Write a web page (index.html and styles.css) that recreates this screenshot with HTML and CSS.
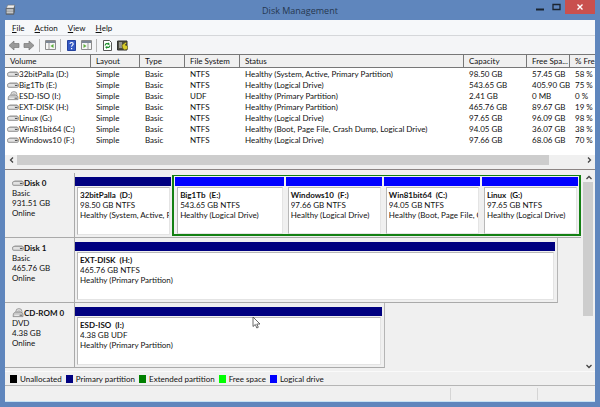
FILE: index.html
```
<!DOCTYPE html>
<html lang="en">
<head>
    <meta charset="UTF-8">
    <meta name="viewport" content="width=device-width, initial-scale=1.0">
    <title>Disk Management</title>
    <link rel="stylesheet" href="styles.css">
</head>
<body>
    <!-- shared drive icons -->
    <svg class="defs" width="0" height="0">
        <symbol id="drive" viewBox="0 0 12 8">
            <path d="M3 1.500h7l1.500 2H.5z" fill="#e4e4e4" stroke="#a0a0a0" stroke-width=".5"/>
            <rect x=".5" y="2.500" width="11" height="4" rx="1.500" fill="#cfcfcf" stroke="#888" stroke-width=".7"/>
            <path d="M1.500 4h6" stroke="#f6f6f6"/>
            <path d="M8 4.500h2.500" stroke="#555"/>
        </symbol>
        <symbol id="cdrom" viewBox="0 0 12 11">
            <circle cx="7" cy="4" r="3.4" fill="#dedede" stroke="#888" stroke-width=".8"/>
            <circle cx="7" cy="4" r="1" fill="#fff" stroke="#888" stroke-width=".6"/>
            <path d="M1 6l2-1.500h6l2.500 1.500v3.500H.5z" fill="#c8c8c8" stroke="#777" stroke-width=".7"/>
            <path d="M2 8h5" stroke="#f4f4f4"/>
            <path d="M8 8h2.500" stroke="#666"/>
        </symbol>
    </svg>

    <div class="window">
        <header class="titlebar">
            <svg class="app-icon" viewBox="0 0 10 11">
                <path d="M2.500 1h6.500l-1 3H1z" fill="#f0f0f0" stroke="#777" stroke-width=".6"/>
                <path d="M1 4h7v5.500H1z" fill="#8d9296" stroke="#555" stroke-width=".6"/>
                <path d="M8 4l1-3v6L8 9.500z" fill="#5b6165"/>
                <path d="M1.500 5.500h6M1.500 7.500h6" stroke="#eee" stroke-width=".8"/>
            </svg>
            <h1 class="title">Disk Management</h1>
            <div class="window-buttons">
                <button class="win-btn" aria-label="Minimize"><svg width="10" height="8"><path d="M1 6.500h8" stroke="#1b2430" stroke-width="2"/></svg></button>
                <button class="win-btn" aria-label="Maximize"><svg width="9" height="8"><path d="M1 1.500h7v5H1z" fill="none" stroke="#1b2430" stroke-width="1.300"/></svg></button>
                <button class="win-btn close" aria-label="Close"><svg width="8" height="8"><path d="M1.500 1.500l5 5M6.500 1.500l-5 5" stroke="#fff" stroke-width="1.400"/></svg></button>
            </div>
        </header>

        <main class="client">
            <nav class="menubar">
                <button><u>F</u>ile</button>
                <button><u>A</u>ction</button>
                <button><u>V</u>iew</button>
                <button><u>H</u>elp</button>
            </nav>

            <div class="toolbar">
                <button aria-label="Back"><svg width="12" height="11"><path d="M1 5.500L6 1v2.500h5v4H6V10z" fill="#999" stroke="#777" stroke-width=".7"/></svg></button>
                <button aria-label="Forward"><svg width="12" height="11"><path d="M11 5.500L6 1v2.500H1v4h5V10z" fill="#999" stroke="#777" stroke-width=".7"/></svg></button>
                <span class="sep"></span>
                <button aria-label="Show console tree"><svg width="11" height="10"><path d="M.5.5h10v9H.5z" fill="#f6f6f6" stroke="#8c8c8c"/><path d="M1 2h9" stroke="#7c8796" stroke-width="2"/><path d="M4 3v6.500" stroke="#999"/><path d="M8.500 4v4L5.500 6z" fill="#5cae3a"/></svg></button>
                <span class="sep"></span>
                <button aria-label="Help"><svg width="9" height="11"><path d="M.5.5h8v10h-8z" fill="#3459c4" stroke="#24419d"/><path d="M3 4c0-2 3.200-2 3.200 0 0 1.200-1.600 1.200-1.600 2.800" fill="none" stroke="#fff" stroke-width="1.100"/><path d="M4 8h1.200v1.200H4z" fill="#fff"/></svg></button>
                <button aria-label="Show action pane"><svg width="11" height="10"><path d="M.5.5h10v9H.5z" fill="#f6f6f6" stroke="#8c8c8c"/><path d="M1 2h9" stroke="#7c8796" stroke-width="2"/><path d="M7 3v6.500" stroke="#999"/><path d="M2.500 4v4l3-2z" fill="#5cae3a"/></svg></button>
                <span class="sep"></span>
                <button aria-label="Refresh"><svg width="9" height="11"><path d="M.5.5h6l2 2v8h-8z" fill="#fff" stroke="#555"/><path d="M2.200 5.500c0-2 2-2.500 3.500-1.500M6.800 5.500c0 2-2 2.500-3.500 1.500" fill="none" stroke="#1e8e2e" stroke-width="1.200"/><path d="M5 2.200l2 2-2.500 1zM4 9l-2-2 2.500-1z" fill="#1e8e2e"/></svg></button>
                <button aria-label="Settings"><svg width="11" height="11"><path d="M.5 1h9.500v9H.5z" fill="#4d4d40" stroke="#333"/><path d="M2 3h3M2 5h3M2 7h3" stroke="#ddd"/><path d="M5 5l4-3 .5 1.500L8 5l2.500 1v3l-3 1-2-2z" fill="#d8cc2c" stroke="#5a5510" stroke-width=".5"/></svg></button>
            </div>

            <section class="volumes">
                <table class="volume-table">
                    <colgroup>
                        <col class="c-volume"><col class="c-layout"><col class="c-type"><col class="c-fs"><col><col class="c-capacity"><col class="c-free"><col class="c-percent">
                    </colgroup>
                    <thead>
                        <tr><th>Volume</th><th>Layout</th><th>Type</th><th>File System</th><th>Status</th><th>Capacity</th><th>Free Spa...</th><th>% Fre</th></tr>
                    </thead>
                    <tbody>
                        <tr><td><svg class="icon"><use href="#drive"/></svg>32bitPalla (D:)</td><td>Simple</td><td>Basic</td><td>NTFS</td><td>Healthy (System, Active, Primary Partition)</td><td>98.50 GB</td><td>57.45 GB</td><td>58 %</td></tr>
                        <tr><td><svg class="icon"><use href="#drive"/></svg>Big1Tb (E:)</td><td>Simple</td><td>Basic</td><td>NTFS</td><td>Healthy (Logical Drive)</td><td>543.65 GB</td><td>405.90 GB</td><td>75 %</td></tr>
                        <tr><td><svg class="icon"><use href="#cdrom"/></svg>ESD-ISO (I:)</td><td>Simple</td><td>Basic</td><td>UDF</td><td>Healthy (Primary Partition)</td><td>2.41 GB</td><td>0 MB</td><td>0 %</td></tr>
                        <tr><td><svg class="icon"><use href="#drive"/></svg>EXT-DISK (H:)</td><td>Simple</td><td>Basic</td><td>NTFS</td><td>Healthy (Primary Partition)</td><td>465.76 GB</td><td>89.67 GB</td><td>19 %</td></tr>
                        <tr><td><svg class="icon"><use href="#drive"/></svg>Linux (G:)</td><td>Simple</td><td>Basic</td><td>NTFS</td><td>Healthy (Logical Drive)</td><td>97.65 GB</td><td>96.09 GB</td><td>98 %</td></tr>
                        <tr><td><svg class="icon"><use href="#drive"/></svg>Win81bit64 (C:)</td><td>Simple</td><td>Basic</td><td>NTFS</td><td>Healthy (Boot, Page File, Crash Dump, Logical Drive)</td><td>94.05 GB</td><td>36.07 GB</td><td>38 %</td></tr>
                        <tr><td><svg class="icon"><use href="#drive"/></svg>Windows10 (F:)</td><td>Simple</td><td>Basic</td><td>NTFS</td><td>Healthy (Logical Drive)</td><td>97.66 GB</td><td>68.06 GB</td><td>70 %</td></tr>
                    </tbody>
                </table>
                <div class="hscroll">
                    <button aria-label="Scroll left"><svg width="5" height="6"><path d="M4 .5L1.500 3 4 5.500" fill="none" stroke="#444" stroke-width="1.300"/></svg></button>
                    <div class="track"><div class="thumb"></div></div>
                    <button aria-label="Scroll right"><svg width="5" height="6"><path d="M1 .5L3.500 3 1 5.500" fill="none" stroke="#444" stroke-width="1.300"/></svg></button>
                </div>
            </section>

            <section class="graph">
                <div class="disks">
                    <div class="disk">
                        <div class="disk-label">
                            <h2><svg class="icon"><use href="#drive"/></svg>Disk 0</h2>
                            <p>Basic</p><p>931.51 GB</p><p>Online</p>
                        </div>
                        <div class="partitions">
                            <div class="part primary first">
                                <div class="info"><h3>32bitPalla&nbsp; (D:)</h3><p>98.50 GB NTFS</p><p>Healthy (System, Active, Primary Partition)</p></div>
                            </div>
                            <div class="extended">
                                <div class="part logical big"><div class="info"><h3>Big1Tb&nbsp; (E:)</h3><p>543.65 GB NTFS</p><p>Healthy (Logical Drive)</p></div></div>
                                <div class="part logical"><div class="info"><h3>Windows10&nbsp; (F:)</h3><p>97.66 GB NTFS</p><p>Healthy (Logical Drive)</p></div></div>
                                <div class="part logical"><div class="info"><h3>Win81bit64&nbsp; (C:)</h3><p>94.05 GB NTFS</p><p>Healthy (Boot, Page File, Crash Dump, Logical Drive)</p></div></div>
                                <div class="part logical"><div class="info"><h3>Linux&nbsp; (G:)</h3><p>97.65 GB NTFS</p><p>Healthy (Logical Drive)</p></div></div>
                            </div>
                        </div>
                    </div>
                    <div class="disk disk-medium">
                        <div class="disk-label">
                            <h2><svg class="icon"><use href="#drive"/></svg>Disk 1</h2>
                            <p>Basic</p><p>465.76 GB</p><p>Online</p>
                        </div>
                        <div class="partitions">
                            <div class="part primary"><div class="info"><h3>EXT-DISK&nbsp; (H:)</h3><p>465.76 GB NTFS</p><p>Healthy (Primary Partition)</p></div></div>
                        </div>
                    </div>
                    <div class="disk disk-small">
                        <div class="disk-label">
                            <h2><svg class="icon"><use href="#cdrom"/></svg>CD-ROM 0</h2>
                            <p>DVD</p><p>4.38 GB</p><p>Online</p>
                        </div>
                        <div class="partitions">
                            <div class="part primary"><div class="info"><h3>ESD-ISO&nbsp; (I:)</h3><p>4.38 GB UDF</p><p>Healthy (Primary Partition)</p></div></div>
                        </div>
                    </div>
                </div>
                <div class="vscroll">
                    <button aria-label="Scroll up"><svg width="6" height="5"><path d="M.5 4L3 1.500 5.500 4" fill="none" stroke="#444" stroke-width="1.300"/></svg></button>
                    <div class="track"><div class="thumb"></div></div>
                    <button aria-label="Scroll down"><svg width="6" height="5"><path d="M.5 1L3 3.500 5.500 1" fill="none" stroke="#444" stroke-width="1.300"/></svg></button>
                </div>
            </section>

            <ul class="legend">
                <li><span class="swatch black"></span>Unallocated</li>
                <li><span class="swatch navy"></span>Primary partition</li>
                <li><span class="swatch green"></span>Extended partition</li>
                <li><span class="swatch lime"></span>Free space</li>
                <li><span class="swatch blue"></span>Logical drive</li>
            </ul>

            <footer class="statusbar"><span></span><span></span><span></span></footer>
        </main>
        <svg class="cursor" viewBox="0 0 9 13"><path d="M1 1v9.500l2.300-2 1.500 3.500 1.500-.7-1.500-3.300H8z" fill="#fff" stroke="#444" stroke-width=".8"/></svg>
    </div>
</body>
</html>
```
FILE: styles.css
```
* {
    box-sizing: border-box;
}
body {
    margin: 0;
    font-family: Lato, "Open Sans", sans-serif;
    font-size: 8px;
    line-height: 10px;
    color: #111;
}
h1, h2, h3, p, ul {
    margin: 0;
    padding: 0;
    font-size: inherit;
    white-space: nowrap;
}
button {
    display: flex;
    align-items: center;
    justify-content: center;
    border: none;
    padding: 0;
    background: none;
    font: inherit;
    color: inherit;
}
.defs {
    position: absolute;
}
.window {
    position: relative;
    display: flex;
    flex-direction: column;
    min-height: 100vh;
    padding: 0 5px 5px;
    background: #5f86bd;
}

/* title bar */
.titlebar {
    display: grid;
    grid-template-columns: 100px 1fr 100px;
    height: 20px;
}
.app-icon {
    width: 11px;
    height: 12px;
    margin-top: 4px;
}
.title {
    font-family: "Open Sans", sans-serif;
    font-size: 9px;
    line-height: 21px;
    font-weight: normal;
    text-align: center;
    color: #26374f;
}
.window-buttons {
    display: flex;
    justify-content: flex-end;
    height: 14px;
}
.win-btn {
    width: 17px;
}
.win-btn.close {
    width: 30px;
    background: #c9504e;
}

.client {
    flex: 1;
    display: flex;
    flex-direction: column;
    background: #f0f0f0;
}
.menubar {
    display: flex;
    gap: 10px;
    height: 16px;
    padding-left: 7px;
    border-bottom: 1px solid #d5d7da;
    background: #f6f8fa;
}
.toolbar {
    display: flex;
    align-items: center;
    gap: 3px;
    height: 18px;
    padding-left: 3px;
    background: #f4f5f7;
}
.toolbar button {
    width: 12px;
}
.sep {
    width: 1px;
    height: 13px;
    margin: 0 1px;
    background: #b5b5b5;
}

/* volume list */
.volumes {
    display: flex;
    flex-direction: column;
    height: 116px;
    border-top: 1px solid #777;
    border-bottom: 1px solid #8c8584;
    background: #fff;
    overflow: hidden;
}
.volume-table {
    width: 100%;
    table-layout: fixed;
    border-collapse: separate;
    border-spacing: 0;
}
.c-volume { width: 86px; }
.c-layout { width: 49px; }
.c-type { width: 45px; }
.c-fs { width: 55px; }
.c-capacity { width: 63px; }
.c-free { width: 43px; }
.c-percent { width: 25px; }
.volume-table th,
.volume-table td {
    height: 11px;
    padding: 0 0 0 5px;
    font-weight: normal;
    text-align: left;
    white-space: nowrap;
    overflow: hidden;
}
.volume-table th {
    height: 13px;
    border-right: 1px solid #777;
    border-bottom: 1px solid #777;
    background: #f0f0f0;
}
.volume-table th:last-child {
    border-right: none;
}
.volume-table td:first-child {
    padding-left: 2px;
}
.icon {
    width: 12px;
    height: 10px;
    vertical-align: top;
}

/* scroll bars */
.hscroll {
    display: flex;
    height: 14px;
    margin-top: auto;
    padding-bottom: 4px;
    background: #f0f0f0;
}
.hscroll button {
    width: 12px;
}
.track {
    flex: 1;
}
.thumb {
    background: #cdcdcd;
}
.hscroll .thumb {
    width: 94%;
    height: 100%;
}
.vscroll {
    display: flex;
    flex-direction: column;
    width: 11px;
    padding-top: 2px;
    margin-right: 1px;
}
.vscroll button {
    height: 10px;
}
.vscroll .thumb {
    width: 10px;
    height: 75%;
}

/* disk graph */
.graph {
    flex: 1;
    display: flex;
    border-bottom: 1px solid #fafafa;
}
.disks {
    flex: 1;
    min-width: 0;
    padding: 3px 2px 0 0;
}
.disk {
    display: flex;
    height: 65px;
    border-bottom: 1px solid #aaa;
}
.disk-medium {
    width: 96%;
}
.disk-small {
    width: 66%;
}
.disk-medium,
.disk-small {
    border-right: 1px solid #b5b5b5;
    padding-right: 2px;
}
.disk-label {
    flex: none;
    width: 70px;
    padding: 5px 0 0 7px;
    border-right: 1px solid #aaa;
}
.disk-label h2 {
    display: flex;
    align-items: center;
}
.partitions {
    flex: 1;
    display: flex;
    min-width: 0;
}
.part {
    display: flex;
    flex-direction: column;
    flex: 1;
    min-width: 0;
    padding-bottom: 2px;
}
.part::before {
    content: "";
    height: 9px;
    margin-top: 4px;
}
.primary::before {
    background: #000080;
}
.logical::before {
    margin-top: 1px;
    background: #0000ff;
}
.part.first {
    flex: 0 0 19%;
    margin-right: 1px;
}
.info {
    flex: 1;
    margin: 1px 1px 0 2px;
    padding: 2px 0 0 2px;
    border: 1px solid #b8b8b8;
    border-right-color: #e4e4e4;
    border-bottom-color: #e4e4e4;
    background: #fff;
    overflow: hidden;
}
.info p {
    overflow: hidden;
}
.extended {
    flex: 1;
    display: flex;
    gap: 2px;
    min-width: 0;
    margin: 2px 0 1px;
    padding: 0 1px;
    border: 2px solid #138013;
    border-top-width: 1px;
    background: #f0f0f0;
}
.extended .part {
    padding-bottom: 0;
}
.extended .big {
    flex-grow: 1.13;
}

.legend {
    display: flex;
    align-items: center;
    gap: 4px;
    height: 14px;
    padding-left: 5px;
    border-bottom: 1px solid #b5b5b5;
    list-style: none;
}
.legend li {
    display: flex;
    align-items: center;
    gap: 3px;
}
.swatch {
    width: 7px;
    height: 8px;
}
.black { background: #000; }
.navy { background: #000080; }
.green { background: #008000; }
.lime { background: #00ff00; }
.blue { background: #0000ff; }

.statusbar {
    display: grid;
    grid-template-columns: 445fr 87fr 57fr;
    height: 16px;
    padding: 2px 0 1px;
    border-bottom: 1px solid #c5e2f5;
}
.statusbar span {
    border-right: 1px solid #d5d5d5;
}
.statusbar span:last-child {
    border-right: none;
}

/* pointer floats over the window */
.cursor {
    position: absolute;
    left: 42%;
    top: 316px;
    width: 9px;
    height: 13px;
}
```
